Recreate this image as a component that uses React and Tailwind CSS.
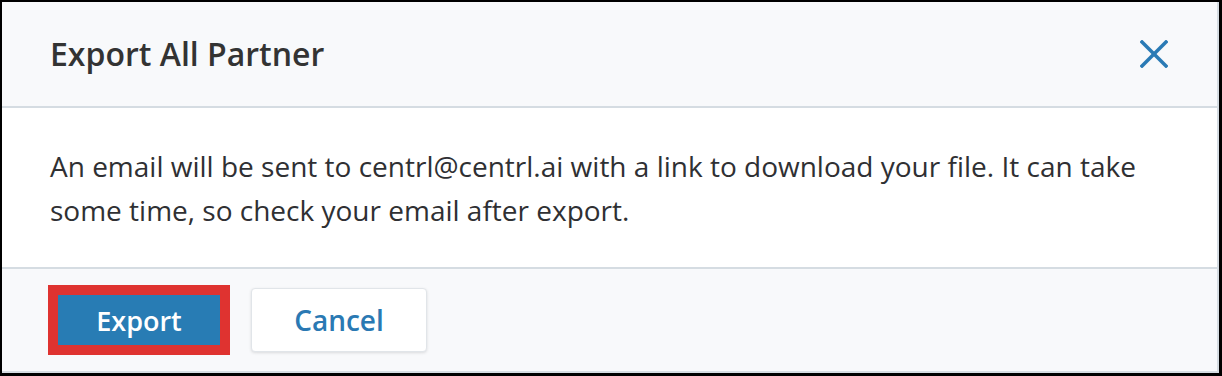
export default function App() {
  return (
    <div
      className="w-[1222px] h-[376px] bg-black pt-[2px] pl-[2px] pr-[3px] pb-[3px]"
      style={{ fontFamily: '"Open Sans", sans-serif' }}
    >
      <div className="flex flex-col h-full border-r-2 border-b-2 border-[#d5dce2] bg-white">
        {/* Header */}
        <div className="flex items-center justify-between h-[106px] pl-[48px] pr-[49px] bg-[#f8f9fb] border-b-2 border-[#d5dce2]">
          <h1 className="text-[32px] font-semibold text-[#333333] leading-none">Export All Partner</h1>
          <button className="w-[28px] h-[28px] text-[#2a7ab5]">
            <svg viewBox="0 0 28 28" className="w-[28px] h-[28px]" fill="none" stroke="currentColor" strokeWidth={3.5} strokeLinecap="square">
              <line x1="2" y1="2" x2="26" y2="26" />
              <line x1="26" y1="2" x2="2" y2="26" />
            </svg>
          </button>
        </div>

        {/* Body */}
        <div className="h-[159px] pl-[48px] pr-[60px] pt-[36px] bg-white">
          <p className="text-[28px] leading-[44px] text-[#2f3033]">
            An email will be sent to centrl@centrl.ai with a link to download your file. It can take some time, so check your email after export.
          </p>
        </div>

        {/* Footer */}
        <div className="flex-1 flex items-center gap-[21px] pl-[46px] bg-[#f8f9fb] border-t-2 border-[#d5dce2]">
          <div className="border-[10px] border-[#df3330]">
            <button className="w-[162px] h-[50px] bg-[#287cb4] text-white text-[27px] font-semibold leading-none">
              Export
            </button>
          </div>
          <button className="w-[176px] h-[64px] bg-white rounded-[4px] border border-[#e1e5e9] shadow-[0_1px_3px_rgba(0,0,0,0.12)] text-[#2a79b3] text-[28px] font-semibold leading-none">
            Cancel
          </button>
        </div>
      </div>
    </div>
  );
}
